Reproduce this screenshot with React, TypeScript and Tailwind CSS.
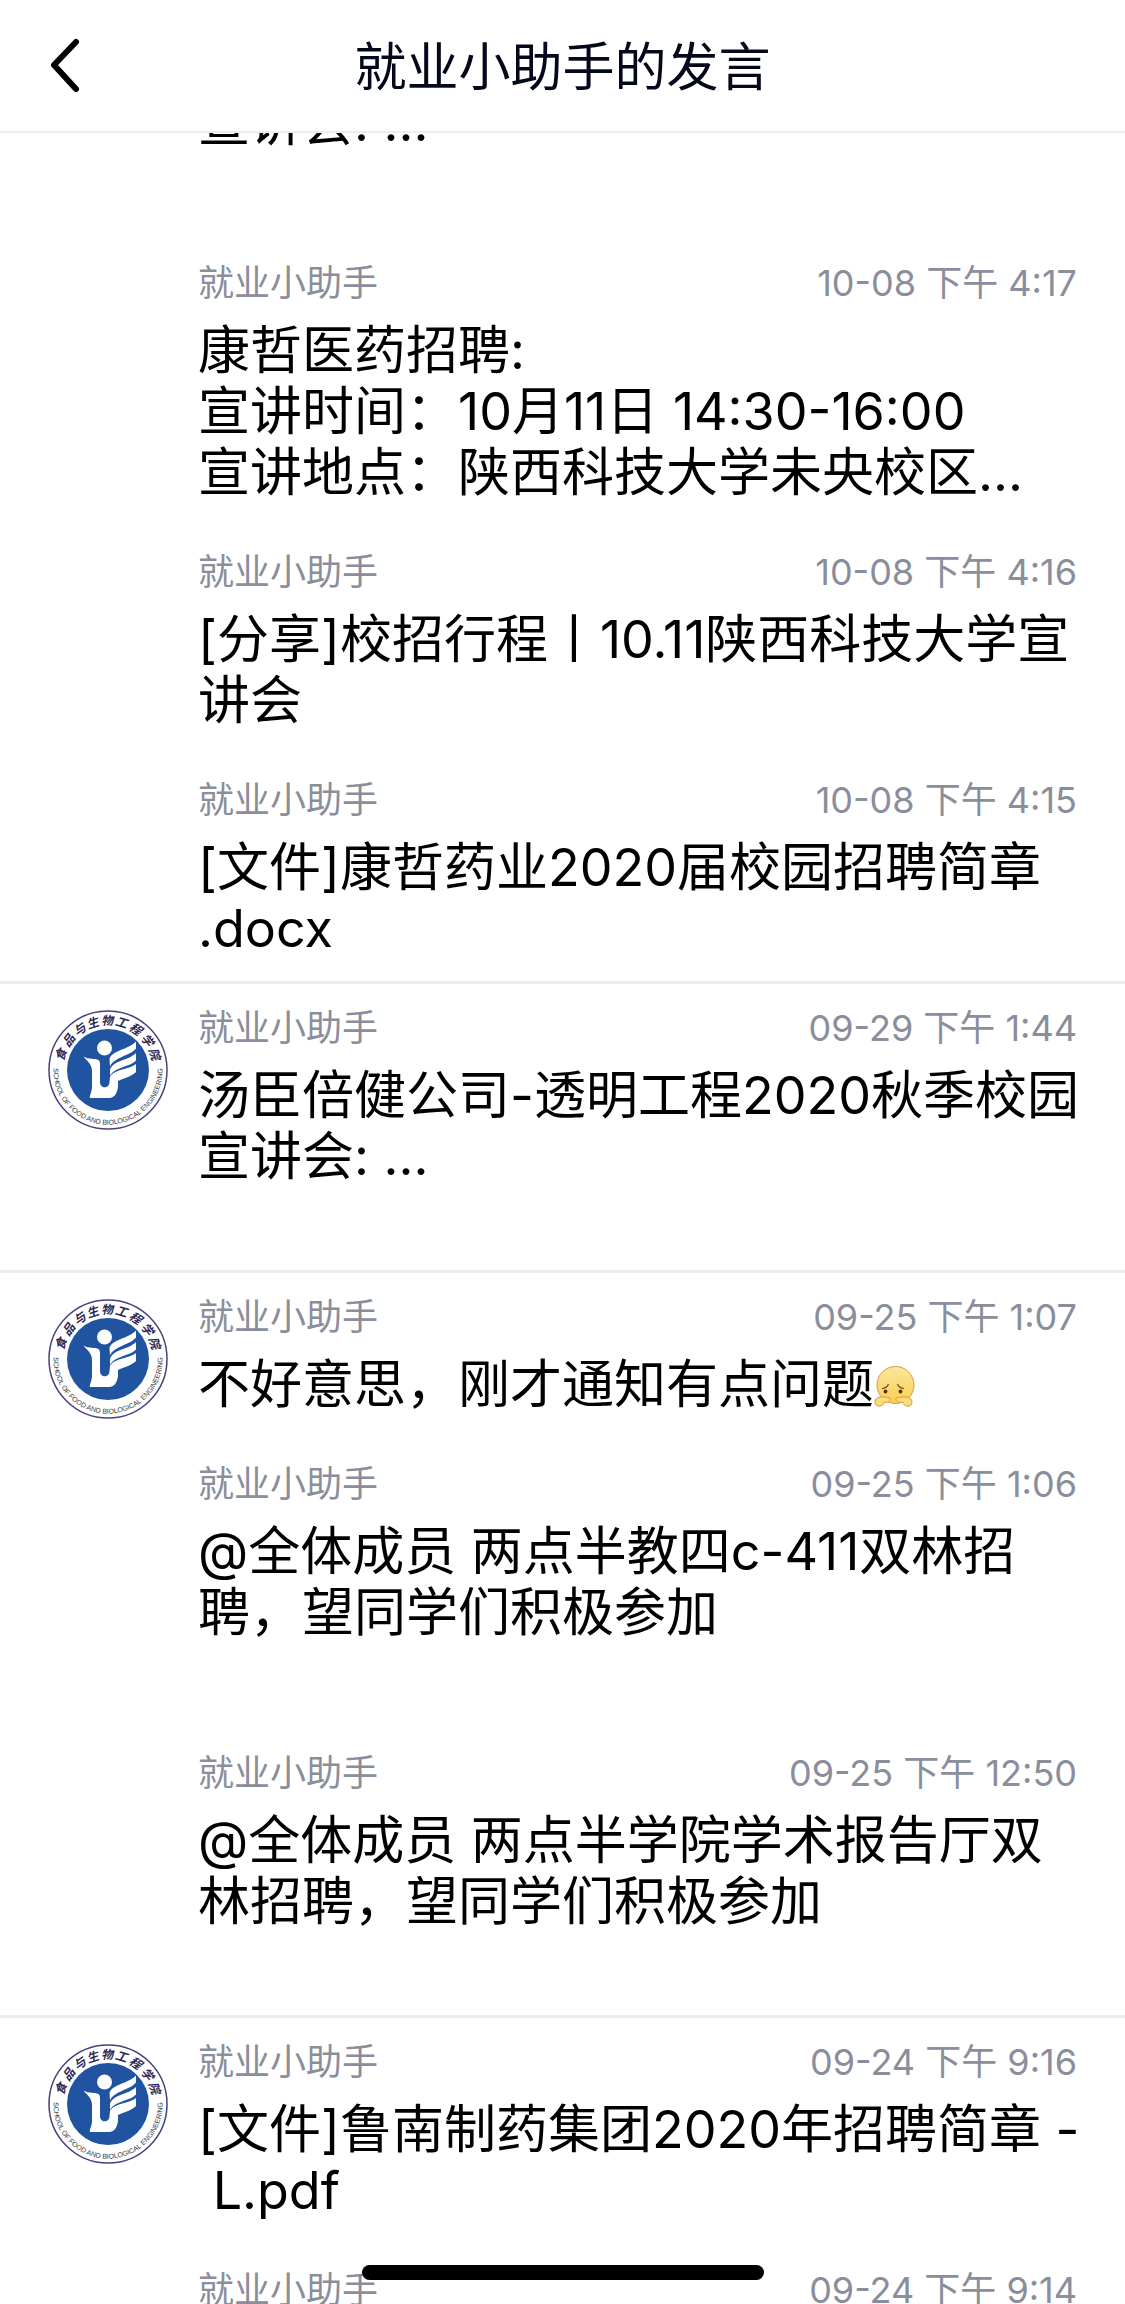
type Message = {
  time?: string
  lines: string[]
  avatar?: boolean
  worried?: boolean
}

const messages: Message[] = [
  { lines: ["宣讲会: ...", ""] },
  {
    time: "10-08 下午 4:17",
    lines: ["康哲医药招聘:", "宣讲时间：10月11日 14:30-16:00", "宣讲地点：陕西科技大学未央校区..."],
  },
  { time: "10-08 下午 4:16", lines: ["[分享]校招行程丨10.11陕西科技大学宣", "讲会"] },
  { time: "10-08 下午 4:15", lines: ["[文件]康哲药业2020届校园招聘简章", ".docx"] },
  { time: "09-29 下午 1:44", lines: ["汤臣倍健公司-透明工程2020秋季校园", "宣讲会: ...", ""], avatar: true },
  { time: "09-25 下午 1:07", lines: ["不好意思，刚才通知有点问题"], avatar: true, worried: true },
  { time: "09-25 下午 1:06", lines: ["@全体成员 两点半教四c-411双林招", "聘，望同学们积极参加", ""] },
  { time: "09-25 下午 12:50", lines: ["@全体成员 两点半学院学术报告厅双", "林招聘，望同学们积极参加", ""] },
  { time: "09-24 下午 9:16", lines: ["[文件]鲁南制药集团2020年招聘简章 -", " L.pdf"], avatar: true },
  { time: "09-24 下午 9:14", lines: [] },
]

const topText = [
  { char: "食", angle: -72 },
  { char: "品", angle: -53 },
  { char: "与", angle: -35 },
  { char: "生", angle: -18 },
  { char: "物", angle: -1 },
  { char: "工", angle: 16 },
  { char: "程", angle: 34 },
  { char: "学", angle: 53 },
  { char: "院", angle: 71 },
]

const SchoolLogo = ({ id }: { id: string }) => {
  return (
    <svg viewBox="0 0 120 120" className="w-[120px] h-[120px]" role="img" aria-label="食品与生物工程学院">
      <circle cx="60" cy="60" r="59" fill="#fff" stroke="#47407c" strokeWidth="1.5" />
      <circle cx="60" cy="60" r="41" fill="#2054a0" />
      <g fill="#fff">
        <circle cx="56.5" cy="38" r="7.5" />
        <path d="M35.5 46.5 C41 50 47 48 50.5 50 Q52 51 52 54 L52 72 C52 79 61.5 79 61.5 72 L62 67 C66 59 80 60 88 54 L88 62 C83 67 76 68 70 71 L70 77 C69 84 66 88 61 88 L42 88 C41 86 44 82 44 77 L44 61 C44 54 39 51 35.5 46.5 Z" />
        <path d="M61.5 49 C64 40 80 40 88 31.5 L88 38.5 C82 46 66 47 62 56.5 Z" />
        <path d="M62 60 C65 50 80 51 88 43 L88 50.5 C82 57 67 57 62 65.5 Z" />
      </g>
      {topText.map(({ char, angle }) => (
        <text
          key={char}
          x="60"
          y="15"
          textAnchor="middle"
          transform={`rotate(${angle} 60 60)`}
          fill="#2c2856"
          className="text-[12px] font-bold italic font-['Noto_Sans_CJK_SC',sans-serif]"
        >
          {char}
        </text>
      ))}
      <path id={id} d="M6 52 A54.6 54.6 0 1 0 114 52" fill="none" />
      <text fill="#34343c" className="text-[7px] font-['Liberation_Sans',sans-serif]">
        <textPath href={`#${id}`} startOffset="50%" textAnchor="middle">
          SCHOOL OF FOOD AND BIOLOGICAL ENGINEERING
        </textPath>
      </text>
    </svg>
  )
}

const WorriedFace = () => {
  return (
    <svg viewBox="0 0 42 42" className="inline-block w-[42px] h-[42px] align-[-4px]" role="img" aria-label="委屈">
      <defs>
        <linearGradient id="face" x1="0" y1="0" x2="0" y2="1">
          <stop offset="0" stopColor="#fae6a0" />
          <stop offset="1" stopColor="#fbd04e" />
        </linearGradient>
      </defs>
      <circle cx="21.5" cy="20" r="18.5" fill="url(#face)" stroke="#dd9a3a" />
      <path d="M8 23.5 Q13 23 14.5 19 M23.5 19 Q25 23 30 23.5" fill="none" stroke="#7a4a1c" strokeWidth="1.2" />
      <circle cx="11.5" cy="26.5" r="1.9" fill="#5a2d10" />
      <circle cx="26.5" cy="26.5" r="1.9" fill="#5a2d10" />
      <g fill="#fbdc7c" stroke="#dd9a3a">
        <path d="M16 33 C9 31 1 31 1 37 C1 43 10 42 10 37 C13 38 17 37 16 33 Z" />
        <path d="M22 33 C29 31 38 31 38 37 C38 43 29 42 29 37 C25 38 21 37 22 33 Z" />
      </g>
    </svg>
  )
}

const MessageItem = ({ message, index }: { message: Message; index: number }) => {
  return (
    <li
      className={`flex px-12 pt-[23px] pb-[22px] border-t-3 ${
        message.avatar ? "border-[#ebebf2]" : "border-transparent"
      }`}
    >
      <div className="w-[150px] h-[100px] pt-[3px] shrink-0">
        {message.avatar && <SchoolLogo id={`ring-${index}`} />}
      </div>
      <div className="flex-1 min-w-0">
        {message.time && (
          <div className="flex justify-between mb-4 text-[36px] leading-[42px] text-[#8a8e9c]">
            <span>就业小助手</span>
            <time>{message.time}</time>
          </div>
        )}
        <div className="text-[52px] leading-[61px] whitespace-pre">
          {message.lines.map((line, i) => (
            <p key={i} className="h-[61px]">
              {line}
              {message.worried && <WorriedFace />}
            </p>
          ))}
        </div>
      </div>
    </li>
  )
}

const App = () => {
  return (
    <div className="h-screen flex flex-col overflow-hidden bg-white text-black font-['Inter','Noto_Sans_CJK_SC',sans-serif]">
      <header className="h-[133px] shrink-0 grid grid-cols-[1fr_auto_1fr] items-center px-12 bg-white border-b-2 border-[#ebebf5]">
        <button type="button" aria-label="返回" className="w-9 h-15">
          <svg viewBox="0 0 36 60" fill="none" stroke="#000" strokeWidth="6" strokeLinecap="round" strokeLinejoin="round">
            <path d="M28 6 L6 29 L28 53" />
          </svg>
        </button>
        <h1 className="pt-1 text-[52px] leading-[61px] text-[#03081a]">就业小助手的发言</h1>
      </header>

      {/* message list, scrolled part way down */}
      <main className="flex-1 min-h-0 overflow-hidden">
        <ul className="-mt-[67px]">
          {messages.map((message, i) => (
            <MessageItem key={i} message={message} index={i} />
          ))}
        </ul>
      </main>

      {/* home indicator */}
      <div className="fixed bottom-6 left-1/2 -translate-x-1/2 w-[402px] h-[15px] rounded-full bg-black" />
    </div>
  )
}

export default App
